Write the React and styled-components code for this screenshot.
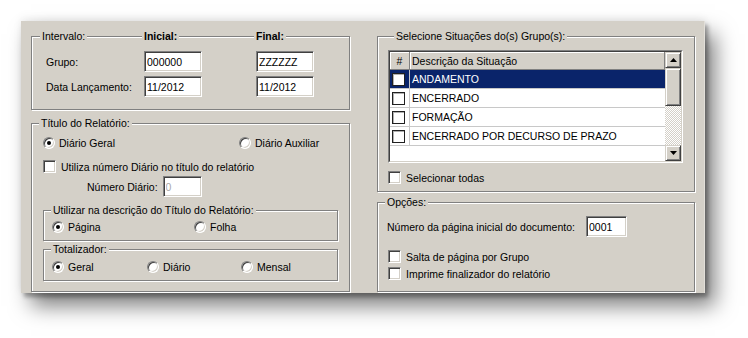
import React from 'react'
import styled, {createGlobalStyle} from 'styled-components'

const GlobalStyle = createGlobalStyle`
  * { box-sizing: border-box; }
  html, body, #root { height: 100%; }
  body {
    margin: 0;
    background: #fff;
    font-family: "Liberation Sans", Arial, sans-serif;
    font-size: 10.5px;
    color: #000;
  }
`

const situacoes = ['ANDAMENTO', 'ENCERRADO', 'FORMAÇÃO', 'ENCERRADO POR DECURSO DE PRAZO']

function App() {
  return (
    <Page>
      <GlobalStyle />
      <Window>
        <Column>
          <Group>
            <IntervalCaption>
              <CaptionCell><CaptionText>Intervalo:</CaptionText><Rule /></CaptionCell>
              <CaptionCell><CaptionText $bold>Inicial:</CaptionText><Rule /></CaptionCell>
              <CaptionCell><CaptionText $bold>Final:</CaptionText><Rule /></CaptionCell>
            </IntervalCaption>
            <IntervalBody>
              <span>Grupo:</span>
              <Field value="000000" readOnly />
              <Field value="ZZZZZZ" readOnly />
              <span>Data Lançamento:</span>
              <Field value="11/2012" readOnly />
              <Field value="11/2012" readOnly />
            </IntervalBody>
          </Group>

          <Group $mt={7}>
            <Caption $indent={7}>Título do Relatório:</Caption>
            <GroupBody $pad="6px 11px 10px">
              <OptionGrid $cols="196px 1fr">
                <Option><Radio $checked />Diário Geral</Option>
                <Option><Radio />Diário Auxiliar</Option>
              </OptionGrid>
              <Option $mt={10}><Check />Utiliza número Diário no título do relatório</Option>
              <NumeroRow>
                <span>Número Diário:</span>
                <Field $w={39} value="0" readOnly disabled />
              </NumeroRow>

              <Group $mt={7}>
                <Caption $indent={7}>Utilizar na descrição do Título do Relatório:</Caption>
                <GroupBody $pad="3px 8px 6px">
                  <OptionGrid $cols="142px 1fr">
                    <Option><Radio $checked />Página</Option>
                    <Option><Radio />Folha</Option>
                  </OptionGrid>
                </GroupBody>
              </Group>

              <Group $mt={2}>
                <Caption $indent={7}>Totalizador:</Caption>
                <GroupBody $pad="4px 8px 6px">
                  <OptionGrid $cols="95px 94px 1fr">
                    <Option><Radio $checked />Geral</Option>
                    <Option><Radio />Diário</Option>
                    <Option><Radio />Mensal</Option>
                  </OptionGrid>
                </GroupBody>
              </Group>
            </GroupBody>
          </Group>
        </Column>

        <Column>
          <Group>
            <Caption $indent={16}>Selecione Situações do(s) Grupo(s):</Caption>
            <GroupBody $pad="7px 11px 7px 10px">
              <ListBox>
                <ListInner>
                  <ListRows>
                    <HeaderRow>
                      <HeadCell $w={20} $center>#</HeadCell>
                      <HeadCell>Descrição da Situação</HeadCell>
                    </HeaderRow>
                    {situacoes.map((s, i) => (
                      <Row key={s} $selected={i === 0}>
                        <CheckCell><GridCheck /></CheckCell>
                        <TextCell>{s}</TextCell>
                      </Row>
                    ))}
                  </ListRows>
                  <ScrollBar>
                    <ScrollButton><Arrow /></ScrollButton>
                    <Thumb />
                    <Track />
                    <ScrollButton><Arrow $down /></ScrollButton>
                  </ScrollBar>
                </ListInner>
              </ListBox>
              <Option $mt={8}><Check />Selecionar todas</Option>
            </GroupBody>
          </Group>

          <Group $mt={4}>
            <Caption $indent={7}>Opções:</Caption>
            <GroupBody $pad="7px 11px 11px 10px">
              <PageRow>
                <span>Número da página inicial do documento:</span>
                <Field $w={41} value="0001" readOnly />
              </PageRow>
              <Option $mt={13}><Check />Salta de página por Grupo</Option>
              <Option $mt={4}><Check />Imprime finalizador do relatório</Option>
            </GroupBody>
          </Group>
        </Column>
      </Window>
    </Page>
  )
}

function Arrow({$down}) {
  return (
    <svg width="7" height="4" viewBox="0 0 7 4">
      <polygon points={$down ? '0,0 7,0 3.5,4' : '0,4 7,4 3.5,0'} fill="#000" />
    </svg>
  )
}

const Page = styled.div`
  height: 100%;
  padding: 21px 0 0 21px;
  background: #fff;
`

const Window = styled.div`
  width: 684px;
  padding: 9px 0 1px 10px;
  background: #d4d0c8;
  border-right: 1px solid #e2dfd9;
  box-shadow:
    3px 4px 4px rgba(0, 0, 0, 0.3),
    10px 13px 20px rgba(0, 0, 0, 0.5),
    0 -2px 8px rgba(0, 0, 0, 0.08);
  display: grid;
  grid-template-columns: 319px 318px;
  column-gap: 27px;
  align-items: start;
`

const Column = styled.div`
  display: flex;
  flex-direction: column;
`

const Group = styled.fieldset`
  margin: ${p => p.$mt || 0}px 0 0;
  padding: 0;
  min-width: 0;
  border: 1px solid #808080;
  box-shadow: inset 1px 1px 0 #fff, 1px 1px 0 #fff;
`

const Caption = styled.legend`
  margin-left: ${p => p.$indent}px;
  padding: 0 2px;
  line-height: 13px;
  background: #d4d0c8;
`

const IntervalCaption = styled.legend`
  margin-left: 8px;
  padding: 0;
  width: 300px;
  line-height: 13px;
  display: grid;
  grid-template-columns: 102px 112px 1fr;
`

const CaptionCell = styled.div`
  display: flex;
`

const CaptionText = styled.span`
  padding: 0 2px;
  background: #d4d0c8;
  font-weight: ${p => (p.$bold ? 700 : 400)};
`

const Rule = styled.div`
  flex: 1;
  align-self: flex-start;
  margin-top: 6px;
  height: 2px;
  border-top: 1px solid #808080;
  border-bottom: 1px solid #fff;
`

const GroupBody = styled.div`
  padding: ${p => p.$pad};
  display: flex;
  flex-direction: column;
`

const IntervalBody = styled.div`
  padding: 8px 0 12px 14px;
  display: grid;
  grid-template-columns: 98px 112px 58px;
  row-gap: 4px;
  align-items: center;
`

const Field = styled.input`
  width: ${p => p.$w || 58}px;
  height: 21px;
  margin: 0;
  padding: 0 2px;
  font: inherit;
  color: #000;
  background: #fff;
  border: 1px solid;
  border-color: #808080 #fff #fff #808080;
  box-shadow: inset 1px 1px 0 #404040, inset -1px -1px 0 #d4d0c8;
  outline: none;

  &:disabled {
    color: #a8a8a8;
  }
`

const OptionGrid = styled.div`
  display: grid;
  grid-template-columns: ${p => p.$cols};
  height: 14px;
  align-items: center;
`

const Option = styled.label`
  display: flex;
  align-items: center;
  gap: 4px;
  height: ${p => (p.$mt !== undefined ? 13 : 14)}px;
  margin-top: ${p => p.$mt || 0}px;
  white-space: nowrap;
`

const Radio = styled.span`
  flex: none;
  width: 12px;
  height: 12px;
  border-radius: 50%;
  background: #fff;
  border: 1px solid;
  border-color: #808080 #fff #fff #808080;
  box-shadow: inset 1px 1px 0 #404040, inset -1px -1px 0 #d4d0c8;

  &::after {
    content: '';
    display: ${p => (p.$checked ? 'block' : 'none')};
    width: 4px;
    height: 4px;
    margin: 3px;
    border-radius: 50%;
    background: #000;
  }
`

const Check = styled.span`
  flex: none;
  width: 13px;
  height: 13px;
  margin-right: 1px;
  background: #fff;
  border: 1px solid;
  border-color: #808080 #fff #fff #808080;
  box-shadow: inset 1px 1px 0 #404040, inset -1px -1px 0 #d4d0c8;
`

const NumeroRow = styled.div`
  display: flex;
  align-items: center;
  gap: 5px;
  margin-top: 3px;
  padding-left: 44px;
`

const PageRow = styled.div`
  display: grid;
  grid-template-columns: 199px 41px;
  align-items: center;
  margin-left: -1px;
`

const ListBox = styled.div`
  height: 113px;
  border: 1px solid;
  border-color: #808080 #fff #fff #808080;
`

const ListInner = styled.div`
  height: 100%;
  border: 1px solid;
  border-color: #404040 #d4d0c8 #d4d0c8 #404040;
  background: #fff;
  display: grid;
  grid-template-columns: 1fr 16px;
`

const ListRows = styled.div`
  display: flex;
  flex-direction: column;
`

const HeaderRow = styled.div`
  display: flex;
  height: 18px;
`

const HeadCell = styled.div`
  ${p => (p.$w ? `width: ${p.$w}px;` : 'flex: 1;')}
  display: flex;
  align-items: center;
  justify-content: ${p => (p.$center ? 'center' : 'flex-start')};
  padding-left: ${p => (p.$center ? 0 : 2)}px;
  background: #d4d0c8;
  border-right: 1px solid #808080;
  border-bottom: 1px solid #808080;
  box-shadow: inset 1px 1px 0 #fff;
`

const Row = styled.div`
  display: flex;
  height: 19px;
  border-bottom: 1px solid #c8c8c8;
  background: ${p => (p.$selected ? '#0a246a' : '#fff')};
  color: ${p => (p.$selected ? '#fff' : '#000')};
`

const CheckCell = styled.div`
  width: 20px;
  display: flex;
  align-items: center;
  padding-left: 2px;
  border-right: 1px solid #c8c8c8;
`

const GridCheck = styled.span`
  width: 13px;
  height: 13px;
  background: #fff;
  border: 1px solid #202020;
  box-shadow: inset 1px 1px 0 #b0b0b0;
`

const TextCell = styled.div`
  flex: 1;
  display: flex;
  align-items: center;
  padding-left: 2px;
`

const ScrollBar = styled.div`
  display: flex;
  flex-direction: column;
`

const raised = `
  background: #d4d0c8;
  border: 1px solid;
  border-color: #d4d0c8 #404040 #404040 #d4d0c8;
  box-shadow: inset 1px 1px 0 #fff, inset -1px -1px 0 #808080;
`

const ScrollButton = styled.div`
  ${raised}
  height: 16px;
  display: flex;
  align-items: center;
  justify-content: center;
`

const Thumb = styled.div`
  ${raised}
  height: 38px;
`

const Track = styled.div`
  flex: 1;
  background: repeating-conic-gradient(#fff 0 25%, #d4d0c8 0 50%) 0 0 / 2px 2px;
`

export default App
